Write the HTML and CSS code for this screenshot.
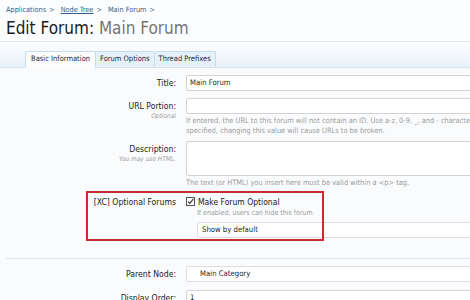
FILE: index.html
```html
<!DOCTYPE html>
<html>
<head>
    <meta charset="utf-8"/>
    <title>Edit Forum: Main Forum</title>
    <link rel="stylesheet" href="styles.css">
</head>
<body>
<div class="page">
    <div class="titleBar">
        <div class="crumbs">
            <a href="#">Applications</a><span class="arrow">&gt;</span>
            <a href="#" class="u">Node Tree</a><span class="arrow">&gt;</span>
            <a href="#">Main Forum</a><span class="arrow">&gt;</span>
        </div>
        <h1>Edit Forum: <em>Main Forum</em></h1>
    </div>

    <div class="tabBar">
        <ul class="tabs">
            <li class="active">Basic Information</li>
            <li>Forum Options</li>
            <li>Thread Prefixes</li>
        </ul>
    </div>

    <div class="form">
        <!--标题-->
        <dl class="ctrlUnit rowTitle">
            <dt><label>Title:</label></dt>
            <dd><div class="textCtrl">Main Forum</div></dd>
        </dl>

        <dl class="ctrlUnit rowUrl">
            <dt><label>URL Portion:</label><dfn>Optional</dfn></dt>
            <dd>
                <div class="textCtrl"></div>
                <p class="explain">If entered, the URL to this forum will not contain an ID. Use a-z, 0-9, _, and - characters only. If<br>specified, changing this value will cause URLs to be broken.</p>
            </dd>
        </dl>

        <dl class="ctrlUnit rowDesc">
            <dt><label>Description:</label><dfn>You may use HTML.</dfn></dt>
            <dd>
                <div class="textCtrl area"></div>
                <p class="explain">The text (or HTML) you insert here must be valid within a &lt;p&gt; tag.</p>
            </dd>
        </dl>

        <!--插件选项-->
        <dl class="ctrlUnit xc">
            <dt><label>[XC] Optional Forums</label></dt>
            <dd>
                <div class="check">
                    <span class="box">
                        <svg width="9" height="9" viewBox="0 0 9 9"><rect x="0.5" y="0.5" width="8" height="8" fill="#fff" stroke="#555"/><path d="M2 4.6 L3.8 6.4 L7.4 1.8" fill="none" stroke="#333" stroke-width="1.1"/></svg>
                    </span>
                    <span>Make Forum Optional</span>
                </div>
                <p class="hint">If enabled, users can hide this forum</p>
                <div class="textCtrl select sub">Show by default</div>
            </dd>
            <div class="highlight"></div>
        </dl>

        <div class="sep"></div>

        <dl class="ctrlUnit rowParent">
            <dt><label>Parent Node:</label></dt>
            <dd><div class="textCtrl select indent">Main Category</div></dd>
        </dl>

        <dl class="ctrlUnit">
            <dt><label>Display Order:</label></dt>
            <dd><div class="textCtrl">1</div></dd>
        </dl>
    </div>
</div>
</body>
</html>
```

FILE: styles.css
```css
html, body {
    margin: 0;
    padding: 0;
    overflow: hidden;
}

body {
    background: #fafbfc;
    font-family: Tahoma, "DejaVu Sans Condensed", "DejaVu Sans", sans-serif;
    color: #222;
}

.page {
    width: 470px;
    height: 300px;
    overflow: hidden;
}

.titleBar {
    background: #fcfdfe;
    padding: 4px 6px 0;
    height: 37px;
    border-bottom: 1px solid #e2e4e8;
}

.crumbs {
    display: flex;
    align-items: center;
    font-size: 7.3px;
    line-height: 11px;
}

.crumbs a {
    color: #2d5f8c;
    text-decoration: none;
}

.crumbs a.u {
    text-decoration: underline;
}

.crumbs .arrow {
    color: #5d7890;
    margin: 0 6px 0 3px;
}

h1 {
    margin: 2px 0 0;
    font-size: 17px;
    line-height: 22px;
    font-weight: normal;
    color: #1c1c1c;
}

h1 em {
    font-style: normal;
    color: #757575;
}

.tabBar {
    height: 25px;
    background: linear-gradient(#fdfeff, #e8f2fa);
    border-bottom: 1px solid #d4e4f1;
    display: flex;
    align-items: flex-end;
}

.tabs {
    list-style: none;
    margin: 0 0 -1px 25px;
    padding: 0;
    display: flex;
}

.tabs li {
    font-size: 7.5px;
    line-height: 14px;
    padding: 0 4px;
    height: 14px;
    color: #2a2a2a;
    background: #e6f0f8;
    border: 1px solid #c6dbeb;
    border-bottom: none;
    border-left: none;
    border-radius: 2px 2px 0 0;
}

.tabs li:first-child {
    border-left: 1px solid #c6dbeb;
}

.tabs li.active {
    background: #fdfdfe;
    padding: 0 5px;
    height: 15px;
    border-bottom: 1px solid #fdfdfe;
}

.form {
    padding-top: 7px;
}

.ctrlUnit {
    display: grid;
    grid-template-columns: 176px 320px;
    column-gap: 10px;
    margin: 0 0 8px;
    position: relative;
}

.ctrlUnit dt {
    text-align: right;
    padding-top: 2px;
}

.ctrlUnit dd {
    margin: 0;
}

.ctrlUnit label {
    display: block;
    font-size: 8.6px;
    line-height: 12px;
    color: #222;
}

.ctrlUnit dfn {
    display: block;
    font-size: 6.5px;
    line-height: 9px;
    font-style: italic;
    color: #9a9a9a;
}

.textCtrl {
    box-sizing: border-box;
    height: 16px;
    background: #fff;
    border: 1px solid #d3d3d6;
    border-radius: 2px;
    font-size: 7.7px;
    line-height: 14px;
    padding: 0 3px;
    color: #1e1e1e;
}

.textCtrl.area {
    height: 35px;
}

.textCtrl.select {
    border-color: #dcdcdf;
}

.textCtrl.indent {
    padding-left: 13px;
}

.textCtrl.sub {
    padding-left: 4px;
}

.explain {
    margin: 2px 0 0;
    font-size: 7.4px;
    line-height: 10px;
    color: #9b9b9b;
}

.rowTitle {
    margin-bottom: 7px;
}

.rowUrl {
    margin-bottom: 5px;
}

.rowDesc {
    margin-bottom: 3px;
}

.xc {
    margin-bottom: 0;
}

.xc dt {
    padding-top: 5px;
}

.xc dd {
    padding-top: 6px;
    padding-bottom: 4px;
}

.check {
    display: flex;
    align-items: flex-start;
    font-size: 8.5px;
    line-height: 11px;
    color: #222;
}

.check .box {
    display: flex;
    margin-right: 3px;
}

.hint {
    margin: 0 0 4px 11px;
    font-size: 7px;
    line-height: 10px;
    color: #9b9b9b;
}

.xc .sub {
    margin-left: 11px;
}

.highlight {
    position: absolute;
    left: 86px;
    top: 0;
    width: 238px;
    height: 50px;
    box-sizing: border-box;
    border: 2px solid #cc2a32;
}

.sep {
    height: 1px;
    background: #e4e5e8;
    margin: 16px 0 7px 6px;
}

.rowParent {
    margin-bottom: 8px;
}
```
